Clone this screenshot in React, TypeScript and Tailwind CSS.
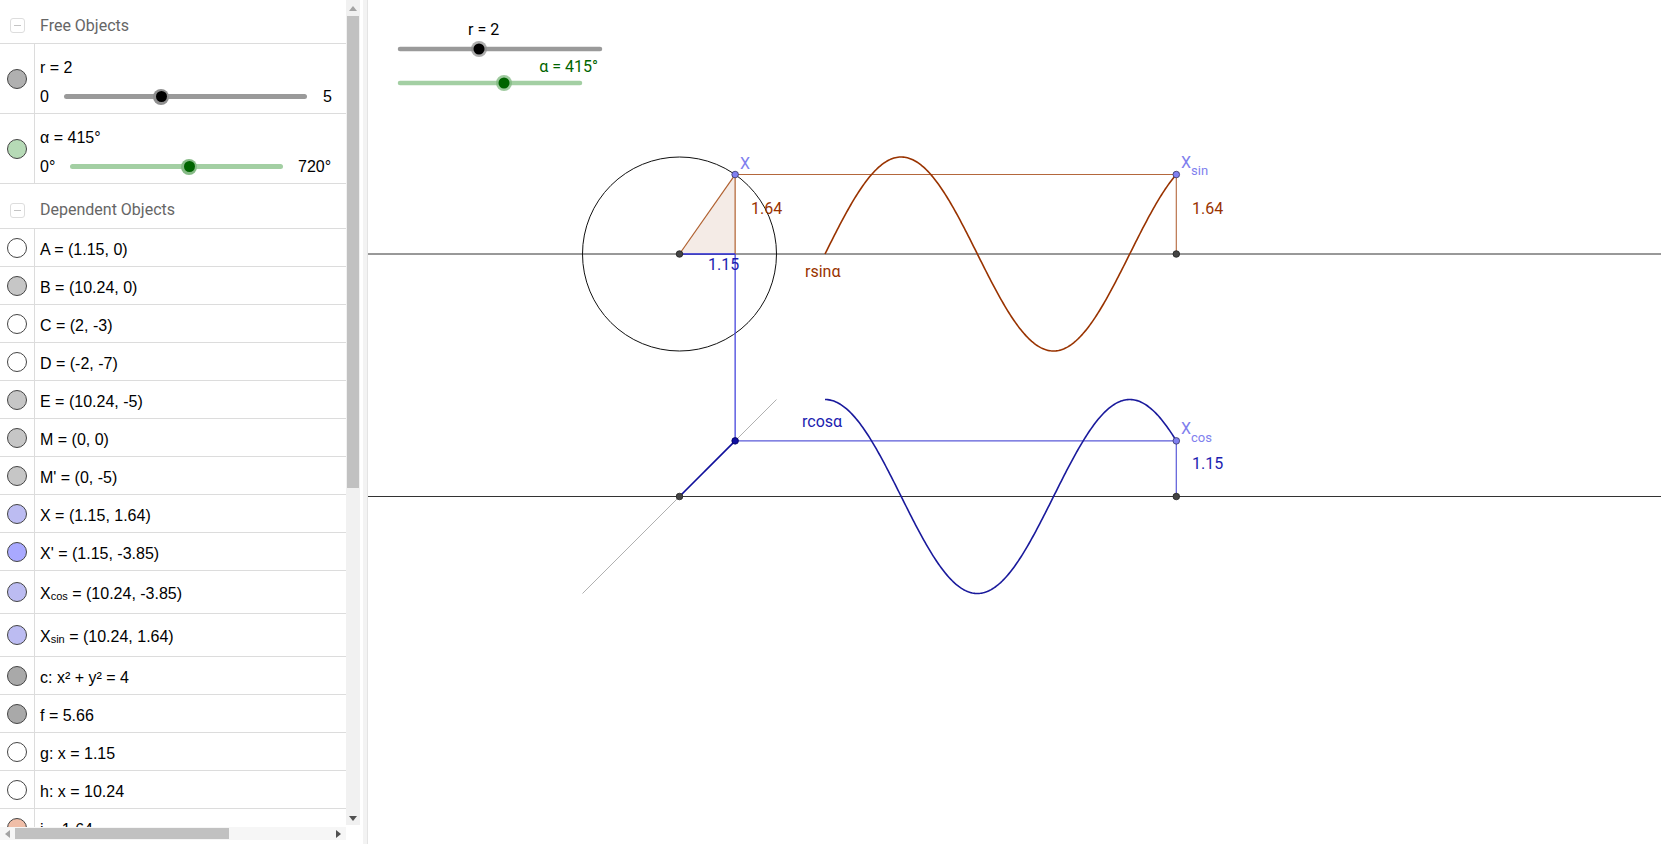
import type { ReactNode } from "react";

const U = 48.5;
const OX = 679.5;
const OY = 254;
const ALPHA = (415 * Math.PI) / 180;
const px = (x: number) => OX + x * U;
const py = (y: number) => OY - y * U;

function curve(fn: (t: number) => number) {
  const pts: string[] = [];
  const n = 260;
  for (let i = 0; i <= n; i++) {
    const t = (ALPHA * i) / n;
    pts.push(`${i ? "L" : "M"}${px(3 + t).toFixed(2)} ${py(fn(t)).toFixed(2)}`);
  }
  return pts.join(" ");
}

const sinPath = curve((t) => 2 * Math.sin(t));
const cosPath = curve((t) => 2 * Math.cos(t) - 5);

const cx = 2 * Math.cos(ALPHA);
const sy = 2 * Math.sin(ALPHA);
const X = { x: px(cx), y: py(sy) };
const A = { x: px(cx), y: OY };
const M = { x: OX, y: OY };
const M2 = { x: OX, y: py(-5) };
const X2 = { x: px(cx), y: py(cx - 5) };
const B = { x: px(3 + ALPHA), y: OY };
const E = { x: px(3 + ALPHA), y: py(-5) };
const Xs = { x: B.x, y: X.y };
const Xc = { x: B.x, y: X2.y };

type Row = { label: ReactNode; fill: string; tall?: boolean };

const rows: Row[] = [
  { label: "A = (1.15, 0)", fill: "bg-white" },
  { label: "B = (10.24, 0)", fill: "bg-[#c6c6c6]" },
  { label: "C = (2, -3)", fill: "bg-white" },
  { label: "D = (-2, -7)", fill: "bg-white" },
  { label: "E = (10.24, -5)", fill: "bg-[#c6c6c6]" },
  { label: "M = (0, 0)", fill: "bg-[#c6c6c6]" },
  { label: "M' = (0, -5)", fill: "bg-[#c6c6c6]" },
  { label: "X = (1.15, 1.64)", fill: "bg-[#bcbcf2]" },
  { label: "X' = (1.15, -3.85)", fill: "bg-[#a9a9ff]" },
  {
    label: (
      <>
        X<sub className="text-[11px] leading-none">cos</sub>&nbsp;= (10.24, -3.85)
      </>
    ),
    fill: "bg-[#bcbcf2]",
    tall: true,
  },
  {
    label: (
      <>
        X<sub className="text-[11px] leading-none">sin</sub>&nbsp;= (10.24, 1.64)
      </>
    ),
    fill: "bg-[#bcbcf2]",
    tall: true,
  },
  { label: "c: x² + y² = 4", fill: "bg-[#a9a9a9]" },
  { label: "f = 5.66", fill: "bg-[#a9a9a9]" },
  { label: "g: x = 1.15", fill: "bg-white" },
  { label: "h: x = 10.24", fill: "bg-white" },
  { label: "i = 1.64", fill: "bg-[#f0bea8]" },
];

function Dot({ fill }: { fill: string }) {
  return <span className={`block h-5 w-5 rounded-full border border-[#444] ${fill}`} />;
}

function ObjRow({ row }: { row: Row }) {
  return (
    <div className={`flex shrink-0 border-b border-[#dcdcdc] ${row.tall ? "h-[43px]" : "h-[38px]"}`}>
      <div className="flex w-[35px] shrink-0 items-center justify-center border-r border-[#dcdcdc]">
        <Dot fill={row.fill} />
      </div>
      <div className="flex items-center whitespace-nowrap pl-[5px] pt-[4px] text-[16px] text-black">{row.label}</div>
    </div>
  );
}

function Header({ title, pad }: { title: string; pad: string }) {
  return (
    <div className={`flex shrink-0 items-center border-b border-[#dcdcdc] ${pad}`}>
      <span className="ml-[10px] flex h-[15px] w-[15px] items-center justify-center rounded-[3px] border border-[#dddddd]">
        <span className="block h-px w-[7px] bg-[#c4c4c4]" />
      </span>
      <span className="ml-[15px] font-['Roboto',sans-serif] text-[16px] text-[#666]">{title}</span>
    </div>
  );
}

function SliderRow(props: {
  fill: string;
  title: string;
  min: string;
  max: string;
  minW: string;
  trackW: string;
  track: string;
  thumbLeft: string;
  halo: string;
  knob: string;
  gap: string;
}) {
  return (
    <div className="flex h-[70px] shrink-0 border-b border-[#dcdcdc]">
      <div className="flex w-[35px] shrink-0 items-center justify-center border-r border-[#dcdcdc]">
        <Dot fill={props.fill} />
      </div>
      <div className="flex flex-1 flex-col pl-[5px] pt-[12px] text-[16px] text-black">
        <div className="h-[24px] leading-[24px]">{props.title}</div>
        <div className="flex h-[33px] items-center">
          <span className={props.minW}>{props.min}</span>
          <div className={`relative h-[5px] rounded-full ${props.trackW} ${props.track}`}>
            <span
              className={`absolute top-1/2 flex h-[16px] w-[16px] -translate-x-1/2 -translate-y-1/2 items-center justify-center rounded-full ${props.thumbLeft} ${props.halo}`}
            >
              <span className={`block h-[11px] w-[11px] rounded-full ${props.knob}`} />
            </span>
          </div>
          <span className={props.gap}>{props.max}</span>
        </div>
      </div>
    </div>
  );
}

function Canvas() {
  const lbl = "font-['Roboto',sans-serif]";
  return (
    <svg width="1293" height="844" className="block">
      <g transform="translate(-368 0)">
        {/* sliders */}
        <text x="468" y="35" fontSize="16" fill="#000" className={lbl}>
          r = 2
        </text>
        <line x1="400" y1="49" x2="600" y2="49" stroke="#9a9a9a" strokeWidth="4.5" strokeLinecap="round" />
        <circle cx="479" cy="49" r="8" fill="#8a8a8a" opacity="0.7" />
        <circle cx="479" cy="49" r="5.5" fill="#000" />
        <text x="598" y="72" fontSize="16" fill="#006400" textAnchor="end" className={lbl}>
          α = 415°
        </text>
        <line x1="400" y1="83" x2="580" y2="83" stroke="#a3cfa3" strokeWidth="4.5" strokeLinecap="round" />
        <circle cx="504" cy="83" r="8" fill="#7fb87f" opacity="0.75" />
        <circle cx="504" cy="83" r="5.5" fill="#006400" />

        {/* axes */}
        <line x1="368" y1={OY} x2="1661" y2={OY} stroke="#333" strokeWidth="1" />
        <line x1="368" y1={M2.y} x2="1661" y2={M2.y} stroke="#333" strokeWidth="1" />

        {/* diagonal */}
        <line x1={px(-2)} y1={py(-7)} x2={px(2)} y2={py(-3)} stroke="#b0b0b0" strokeWidth="1" />

        {/* triangle */}
        <polygon points={`${M.x},${M.y} ${A.x},${A.y} ${X.x},${X.y}`} fill="#f4ebe6" />
        <line x1={M.x} y1={M.y} x2={X.x} y2={X.y} stroke="#b0602f" strokeWidth="1.2" />
        <line x1={A.x} y1={A.y} x2={X.x} y2={X.y} stroke="#b0602f" strokeWidth="1.2" />

        {/* circle */}
        <circle cx={OX} cy={OY} r={2 * U} fill="none" stroke="#111" strokeWidth="1" />

        {/* projections */}
        <line x1={M.x} y1={M.y} x2={A.x} y2={A.y} stroke="#2222cc" strokeWidth="1.6" />
        <line x1={A.x} y1={A.y} x2={X2.x} y2={X2.y} stroke="#4646dd" strokeWidth="1.3" />
        <line x1={X.x} y1={X.y} x2={Xs.x} y2={Xs.y} stroke="#b4673c" strokeWidth="1.1" />
        <line x1={Xs.x} y1={Xs.y} x2={B.x} y2={B.y} stroke="#b4673c" strokeWidth="1.1" />
        <line x1={X2.x} y1={X2.y} x2={Xc.x} y2={Xc.y} stroke="#5a5ad8" strokeWidth="1.2" />
        <line x1={Xc.x} y1={Xc.y} x2={E.x} y2={E.y} stroke="#5a5ad8" strokeWidth="1.2" />
        <line x1={M2.x} y1={M2.y} x2={X2.x} y2={X2.y} stroke="#10109c" strokeWidth="1.7" />

        {/* curves */}
        <path d={sinPath} fill="none" stroke="#993300" strokeWidth="1.6" />
        <path d={cosPath} fill="none" stroke="#1a1a9c" strokeWidth="1.6" />

        {/* points */}
        {[M, M2, B, E].map((p, i) => (
          <circle key={i} cx={p.x} cy={p.y} r="3.3" fill="#444" stroke="#222" strokeWidth="0.8" />
        ))}
        <circle cx={X2.x} cy={X2.y} r="3.3" fill="#1010a0" stroke="#000060" strokeWidth="0.8" />
        {[X, Xs, Xc].map((p, i) => (
          <circle key={i} cx={p.x} cy={p.y} r="3.3" fill="#8080f0" stroke="#333366" strokeWidth="0.8" />
        ))}

        {/* labels */}
        <text x="740" y="169" fontSize="16" fill="#7f7fee" className={lbl}>
          X
        </text>
        <text x="1181" y="168" fontSize="16" fill="#7f7fee" className={lbl}>
          X
          <tspan fontSize="13" dy="7">
            sin
          </tspan>
        </text>
        <text x="1181" y="434" fontSize="16" fill="#7f7fee" className={lbl}>
          X
          <tspan fontSize="13" dy="8">
            cos
          </tspan>
        </text>
        <text x="751" y="214" fontSize="16" fill="#993300" className={lbl}>
          1.64
        </text>
        <text x="1192" y="214" fontSize="16" fill="#993300" className={lbl}>
          1.64
        </text>
        <text x="708" y="270" fontSize="16" fill="#1c1cb0" className={lbl}>
          1.15
        </text>
        <text x="1192" y="469" fontSize="16" fill="#1c1cb0" className={lbl}>
          1.15
        </text>
        <text x="805" y="277" fontSize="16" fill="#993300" className={lbl}>
          rsinα
        </text>
        <text x="802" y="427" fontSize="16" fill="#1c1cb0" className={lbl}>
          rcosα
        </text>
      </g>
    </svg>
  );
}

export default function App() {
  return (
    <div className="flex h-[844px] w-full overflow-hidden bg-white font-['Liberation_Sans',Arial,sans-serif]">
      <aside className="flex w-[360px] shrink-0 flex-col">
        <div className="flex h-[827px]">
          <div className="flex w-[346px] flex-col overflow-hidden">
            <Header title="Free Objects" pad="h-[44px] pt-[8px]" />
            <SliderRow
              fill="bg-[#b0b0b0]"
              title="r = 2"
              min="0"
              max="5"
              minW="w-[24px]"
              trackW="w-[243px]"
              track="bg-[#9a9a9a]"
              thumbLeft="left-[97px]"
              halo="bg-[#8f8f8f]"
              knob="bg-black"
              gap="ml-[16px]"
            />
            <SliderRow
              fill="bg-[#b6dab6]"
              title="α = 415°"
              min="0°"
              max="720°"
              minW="w-[30px]"
              trackW="w-[213px]"
              track="bg-[#a3cfa3]"
              thumbLeft="left-[119px]"
              halo="bg-[#86bb86]"
              knob="bg-[#006400]"
              gap="ml-[15px]"
            />
            <Header title="Dependent Objects" pad="h-[45px] pt-[8px]" />
            {rows.map((r, i) => (
              <ObjRow key={i} row={r} />
            ))}
          </div>
          <div className="flex h-[825px] w-[14px] flex-col bg-[#f1f1f1]">
            <div className="flex h-[16px] items-center justify-center">
              <svg width="8" height="5">
                <polygon points="0,5 8,5 4,0" fill="#a3a3a3" />
              </svg>
            </div>
            <div className="mx-[1px] h-[472px] bg-[#c1c1c1]" />
            <div className="flex-1" />
            <div className="flex h-[14px] items-center justify-center">
              <svg width="8" height="5">
                <polygon points="0,0 8,0 4,5" fill="#505050" />
              </svg>
            </div>
          </div>
        </div>
        <div className="flex h-[13px] w-[346px] items-center bg-[#f6f6f6]">
          <div className="flex w-[15px] justify-center">
            <svg width="5" height="8">
              <polygon points="5,0 5,8 0,4" fill="#a3a3a3" />
            </svg>
          </div>
          <div className="h-[11px] w-[214px] bg-[#c1c1c1]" />
          <div className="flex-1" />
          <div className="flex w-[15px] justify-center">
            <svg width="5" height="8">
              <polygon points="0,0 0,8 5,4" fill="#505050" />
            </svg>
          </div>
        </div>
      </aside>
      <div className="flex w-[8px] shrink-0">
        <div className="w-[3px] bg-white" />
        <div className="flex-1 border-r border-[#e4e4e4] bg-[#f3f3f3]" />
      </div>
      <main className="relative flex-1">
        <Canvas />
      </main>
    </div>
  );
}
